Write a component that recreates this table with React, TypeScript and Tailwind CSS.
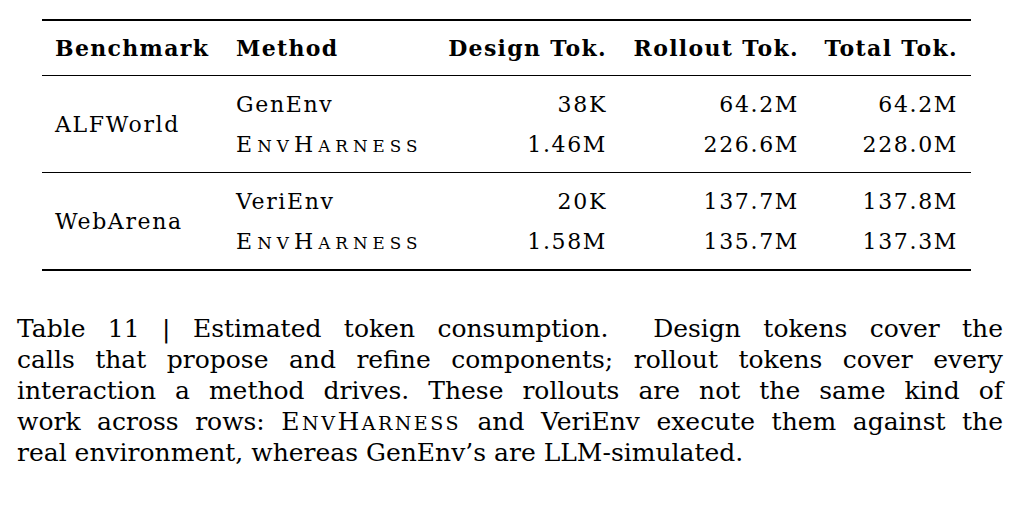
import React from "react";

const serif = { fontFamily: '"DejaVu Serif", serif' };

function EH({ t }: { t: string }) {
  return (
    <span className={t}>
      E<span className="text-[0.76em] leading-none">NV</span>H<span className="text-[0.76em] leading-none">ARNESS</span>
    </span>
  );
}

const Line = ({ children, last }: { children: React.ReactNode; last?: boolean }) => (
  <div className={last ? "text-left" : "text-justify [text-align-last:justify]"}>{children}</div>
);

export default function App() {
  const rows = [
    { b: "ALFWorld", items: [["GenEnv", "38K", "64.2M", "64.2M"], ["EH", "1.46M", "226.6M", "228.0M"]] },
    { b: "WebArena", items: [["VeriEnv", "20K", "137.7M", "137.8M"], ["EH", "1.58M", "135.7M", "137.3M"]] },
  ];
  return (
    <div className="w-[1021px] h-[520px] bg-white text-black overflow-hidden font-['DejaVu_Serif',serif]" style={serif}>
      <div className="pt-[19px] pl-[42px] w-[971px]">
        <div className="border-t-[2px] border-b-[2px] border-black">
          <div className="grid grid-cols-[181px_204px_167px_192px_159px] pl-[13px] h-[55px] items-center text-[22px] tracking-[0.06em] font-bold border-b border-black">
            <div>Benchmark</div>
            <div>Method</div>
            <div className="text-right">Design Tok.</div>
            <div className="text-right">Rollout Tok.</div>
            <div className="text-right">Total Tok.</div>
          </div>
          {rows.map((g, gi) => (
            <div key={g.b} className={"pl-[13px] py-[8px] text-[22px] tracking-[0.075em] flex " + (gi === 0 ? "border-b border-black" : "")}>
              <div className="w-[181px] flex items-center">{g.b}</div>
              <div className="flex flex-col">
                {g.items.map((r, ri) => (
                  <div key={ri} className="grid grid-cols-[204px_167px_192px_159px] h-[40px] items-center">
                    <div>{r[0] === "EH" ? <EH t="tracking-[0.23em]" /> : r[0]}</div>
                    <div className="text-right">{r[1]}</div>
                    <div className="text-right">{r[2]}</div>
                    <div className="text-right">{r[3]}</div>
                  </div>
                ))}
              </div>
            </div>
          ))}
        </div>
      </div>
      <div className="mt-[42px] pl-[17px] w-[1003px] text-[25px] leading-[31px]">
        <Line>Table 11 | Estimated token consumption.&nbsp; Design tokens cover the</Line>
        <Line>calls that propose and refine components; rollout tokens cover every</Line>
        <Line>interaction a method drives. These rollouts are not the same kind of</Line>
        <Line>work across rows: <EH t="tracking-[0.1em]" /> and VeriEnv execute them against the</Line>
        <Line last>real environment, whereas GenEnv’s are LLM-simulated.</Line>
      </div>
    </div>
  );
}
